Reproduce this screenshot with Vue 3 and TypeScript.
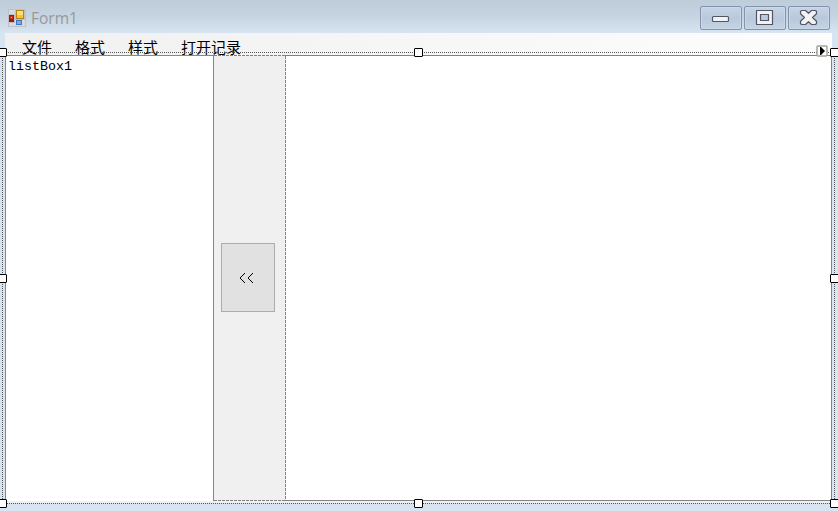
<template>
  <div class="form">
    <header class="titlebar">
      <svg class="app-icon" viewBox="0 0 18 18" shape-rendering="crispEdges">
        <path fill="#bfc1c3" d="M0 0h18v18H0z" />
        <path fill="#d4dbe2" d="M1 1h6v4H1zM1 14h6v3H1zM7 11h10v6H7z" />
        <path fill="#a01810" d="M1 6h5v7H1z" />
        <path fill="#c93222" d="M2 7h3v3H2z" />
        <path fill="#f0a68c" d="M3 8h1v1H3z" />
        <path fill="#b78317" d="M8 1h8v9H8z" />
        <path fill="#f3c631" d="M9 2h6v7H9z" />
        <path fill="#ffe06c" d="M9 2h6v4H9z" />
        <path fill="#3f76c8" d="M8 11h6v5H8z" />
        <path fill="#78aaf0" d="M9 12h4v3H9z" />
      </svg>
      <span class="title">Form1</span>
      <div class="controls">
        <button class="control" aria-label="Minimize">
          <svg viewBox="0 0 20 18">
            <rect x="1.5" y="7.5" width="16" height="5" rx="1" />
          </svg>
        </button>
        <button class="control" aria-label="Maximize">
          <svg viewBox="0 0 20 18">
            <path fill-rule="evenodd" d="M1.500 1.500h16v14h-16zM5.500 5.500v6h8v-6z" />
          </svg>
        </button>
        <button class="control" aria-label="Close">
          <svg viewBox="0 0 20 18">
            <path
              d="M2.500 1.500h4l3 2.800 3-2.800h4l1 1v2.200l-4 3.800 4 3.800v2.200l-1 1h-4l-3-2.800-3 2.800h-4l-1-1v-2.200l4-3.800-4-3.800v-2.200z"
            />
          </svg>
        </button>
      </div>
    </header>

    <nav class="menu">
      <span v-for="item in menuItems" :key="item">{{ item }}</span>
    </nav>

    <main class="client">
      <div class="list-box">listBox1</div>
      <div class="panel">
        <button class="collapse" aria-label="Collapse">
          <svg viewBox="0 0 14 11" shape-rendering="crispEdges">
            <path :d="chevron" />
            <path :d="chevron" transform="translate(8 0)" />
          </svg>
        </button>
      </div>
      <div class="text-box"></div>
    </main>

    <div class="dots horizontal top"></div>
    <div class="dots horizontal bottom"></div>
    <div class="dots vertical left"></div>
    <div class="dots vertical right"></div>
    <i v-for="handle in handles" :key="handle" class="handle" :class="handle.split('-')"></i>
    <svg class="smart-tag" viewBox="0 0 12 12">
      <rect x="1" y="1" width="10" height="10" rx="1" fill="#fff" stroke="#a4a49c" stroke-width="1.5" />
      <path d="M4 2v8h1l4-4-4-4z" />
    </svg>
  </div>
</template>

<script setup lang="ts">
const menuItems: string[] = ["文件", "格式", "样式", "打开记录"];

const handles: string[] = [
  "top-left",
  "top-center",
  "top-right",
  "middle-left",
  "middle-right",
  "bottom-left",
  "bottom-center",
  "bottom-right",
];

// one pixel per row, stepping in to the left and back out
const chevron = [4, 3, 2, 1, 0, 0, 1, 2, 3, 4].map((x, y) => `M${x} ${y}h1v1h-1z`).join("");
</script>

<style>
body {
  margin: 0;
}
</style>

<style scoped>
.form {
  position: relative;
  display: flex;
  flex-direction: column;
  box-sizing: border-box;
  width: 838px;
  height: 511px;
  padding: 0 6px 10px 5px;
  overflow: hidden;
  background: #d7e4f2;
}

.titlebar {
  display: flex;
  flex: none;
  align-items: flex-start;
  height: 33px;
  margin: 0 -6px 0 -5px;
  padding-left: 8px;
  background: linear-gradient(#bfcddb, #c6d4e2 50%, #d7e4f2);
}

.app-icon {
  width: 18px;
  height: 18px;
  margin-top: 9px;
}

.title {
  margin: 8px 0 0 5px;
  color: #999;
  font: 15.5px/20px "Open Sans", sans-serif;
}

.controls {
  display: flex;
  gap: 2px;
  margin: 6px 8px 0 auto;
}

.control {
  display: flex;
  align-items: center;
  justify-content: center;
  box-sizing: border-box;
  width: 42px;
  height: 24px;
  padding: 0;
  border: 1px solid #8393ae;
  border-radius: 2px;
  background: linear-gradient(#c6d5e5, #b8c9dc 50%, #c5d4e4);
  box-shadow: inset 0 0 0 1px #cad8e7;
}

.control svg {
  width: 20px;
  height: 18px;
  fill: #f2f2f2;
  stroke: #535666;
  stroke-width: 1.2;
  stroke-linejoin: round;
}

.menu {
  display: flex;
  flex: none;
  gap: 23px;
  box-sizing: border-box;
  height: 22px;
  padding: 4px 0 0 17px;
  background: linear-gradient(90deg, #f0f0f0, #fdfdfd);
  color: #000;
  font: 15px/20px "Noto Sans CJK SC", sans-serif;
}

.client {
  display: flex;
  flex: 1;
  min-height: 0;
}

.list-box {
  box-sizing: border-box;
  width: 209px;
  border: 1px solid #828790;
  border-bottom: 0;
  padding: 2px;
  background: #fff;
  font: 13.33px/17px "Liberation Mono", monospace;
}

.panel {
  display: flex;
  box-sizing: border-box;
  width: 71px;
  padding: 188px 0 0 7px;
  background:
    repeating-linear-gradient(90deg, #828282 0 3px, transparent 3px 4px) top / 100% 1px no-repeat,
    repeating-linear-gradient(90deg, #828282 0 3px, transparent 3px 4px) bottom / 100% 1px no-repeat,
    #f0f0f0;
}

.collapse {
  display: flex;
  flex: none;
  box-sizing: border-box;
  width: 54px;
  height: 69px;
  padding: 29px 0 0 18px;
  border: 1px solid #adadad;
  background: #e1e1e1;
}

.collapse svg {
  width: 14px;
  height: 11px;
}

.text-box {
  flex: 1;
  box-sizing: border-box;
  border: 1px solid #828282;
  border-left: 0;
  background:
    repeating-linear-gradient(#828282 0 3px, #f0f0f0 3px 4px) left / 1px 100% no-repeat,
    #fff;
}

.dots {
  position: absolute;
}

.horizontal {
  left: 0;
  width: 838px;
  height: 1px;
  background: repeating-linear-gradient(90deg, #555 0 1px, transparent 1px 2px);
}

.vertical {
  top: 52px;
  width: 1px;
  height: 452px;
  background: repeating-linear-gradient(#555 0 1px, transparent 1px 2px);
}

.dots.top {
  top: 52px;
}

.dots.bottom {
  top: 503px;
  left: 5px;
  width: 827px;
  box-shadow:
    0 -1px #f0f0f0,
    0 -2px #f0f0f0;
}

.dots.left {
  left: 2px;
}

.dots.right {
  left: 834px;
}

.handle {
  position: absolute;
  box-sizing: border-box;
  width: 9px;
  height: 9px;
  border: 1px solid #000;
  border-radius: 1px;
  background: #fff;
}

.handle.top {
  top: 48px;
}

.handle.middle {
  top: 274px;
}

.handle.bottom {
  top: 499px;
}

.handle.left {
  left: -2px;
}

.handle.center {
  left: 414px;
}

.handle.right {
  left: 830px;
}

.smart-tag {
  position: absolute;
  top: 45px;
  left: 816px;
  width: 12px;
  height: 12px;
}
</style>
